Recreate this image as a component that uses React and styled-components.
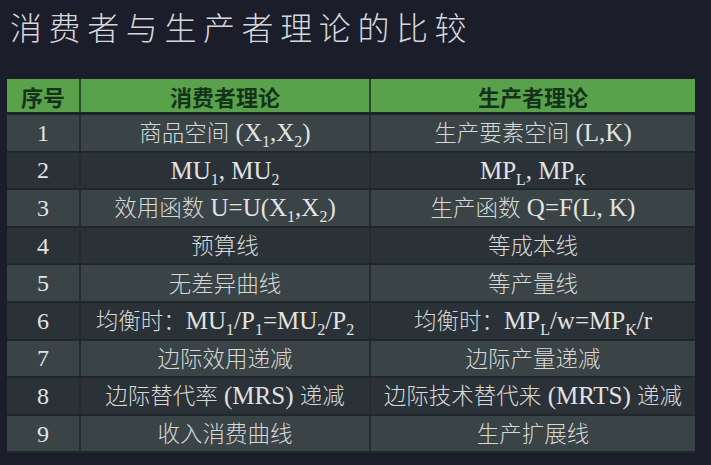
import React from 'react';
import styled, { createGlobalStyle } from 'styled-components';

const GlobalStyle = createGlobalStyle`
  html, body {
    margin: 0;
    padding: 0;
    background: #1c1d2a;
  }
`;

const Page = styled.div`
  width: 711px;
  height: 465px;
  background: #1c1d2a;
  padding: 7px 0 0 7px;
  box-sizing: border-box;
  overflow: hidden;
`;

const Title = styled.h1`
  margin: 0 0 0 3px;
  height: 72px;
  font-family: "Noto Sans CJK SC", sans-serif;
  font-weight: 300;
  font-size: 32px;
  letter-spacing: 6.6px;
  line-height: 38px;
  color: #d4d8dc;
`;

const Table = styled.table`
  width: 688px;
  border-collapse: collapse;
  table-layout: fixed;
`;

const HeadCell = styled.th`
  background-color: #5aa14b;
  color: #14321a;
  height: 33px;
  padding: 0;
  font-family: "Noto Sans CJK SC", sans-serif;
  font-weight: 700;
  font-size: 22px;
  line-height: 1;
  text-align: center;
  border-left: 2px solid #2c4a2c;
  border-bottom: 3px solid #1e2426;
  &:first-child {
    border-left: none;
  }
`;

const Row = styled.tr`
  background-color: ${p => (p.$odd ? '#3a4345' : '#2b3237')};
`;

const Cell = styled.td`
  height: 35.6px;
  padding: 0;
  text-align: center;
  color: #e2e2e2;
  font-family: "Liberation Serif", "Noto Sans CJK SC", serif;
  font-size: 25px;
  line-height: 1;
  border-left: 2px solid #262c30;
  border-bottom: 2px solid #21262a;
  white-space: nowrap;
  &:first-child {
    border-left: none;
    font-size: 24px;
  }
`;

const Han = styled.span`
  font-family: "Noto Sans CJK SC", sans-serif;
  font-weight: 300;
  font-size: 22.5px;
  color: #d6d8d8;
`;

const Sub = styled.sub`
  font-size: 16px;
  vertical-align: -6px;
  line-height: 0;
`;

const rows = [
  {
    n: '1',
    a: <><Han>商品空间</Han> (X<Sub>1</Sub>,X<Sub>2</Sub>)</>,
    b: <><Han>生产要素空间</Han> (L,K)</>,
  },
  {
    n: '2',
    a: <>MU<Sub>1</Sub>, MU<Sub>2</Sub></>,
    b: <>MP<Sub>L</Sub>, MP<Sub>K</Sub></>,
  },
  {
    n: '3',
    a: <><Han>效用函数</Han> U=U(X<Sub>1</Sub>,X<Sub>2</Sub>)</>,
    b: <><Han>生产函数</Han> Q=F(L, K)</>,
  },
  { n: '4', a: <Han>预算线</Han>, b: <Han>等成本线</Han> },
  { n: '5', a: <Han>无差异曲线</Han>, b: <Han>等产量线</Han> },
  {
    n: '6',
    a: <><Han>均衡时：</Han>MU<Sub>1</Sub>/P<Sub>1</Sub>=MU<Sub>2</Sub>/P<Sub>2</Sub></>,
    b: <><Han>均衡时：</Han>MP<Sub>L</Sub>/w=MP<Sub>K</Sub>/r</>,
  },
  { n: '7', a: <Han>边际效用递减</Han>, b: <Han>边际产量递减</Han> },
  {
    n: '8',
    a: <><Han>边际替代率</Han> (MRS) <Han>递减</Han></>,
    b: <><Han>边际技术替代来</Han> (MRTS) <Han>递减</Han></>,
  },
  { n: '9', a: <Han>收入消费曲线</Han>, b: <Han>生产扩展线</Han> },
];

export default function App() {
  return (
    <Page>
      <GlobalStyle />
      <Title>消费者与生产者理论的比较</Title>
      <Table>
        <colgroup>
          <col style={{ width: 73 }} />
          <col style={{ width: 290 }} />
          <col style={{ width: 325 }} />
        </colgroup>
        <thead>
          <tr>
            <HeadCell>序号</HeadCell>
            <HeadCell>消费者理论</HeadCell>
            <HeadCell>生产者理论</HeadCell>
          </tr>
        </thead>
        <tbody>
          {rows.map((r, i) => (
            <Row key={r.n} $odd={i % 2 === 0}>
              <Cell>{r.n}</Cell>
              <Cell>{r.a}</Cell>
              <Cell>{r.b}</Cell>
            </Row>
          ))}
        </tbody>
      </Table>
    </Page>
  );
}
